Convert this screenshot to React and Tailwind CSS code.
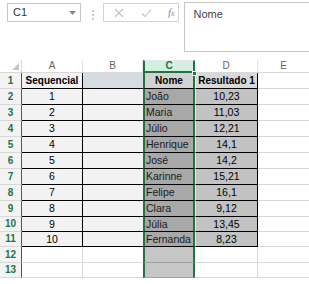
import React from "react";

const data = [
  ["1", "João", "10,23"],
  ["2", "Maria", "11,03"],
  ["3", "Júlio", "12,21"],
  ["4", "Henrique", "14,1"],
  ["5", "José", "14,2"],
  ["6", "Karinne", "15,21"],
  ["7", "Felipe", "16,1"],
  ["8", "Clara", "9,12"],
  ["9", "Júlia", "13,45"],
  ["10", "Fernanda", "8,23"],
];

const cols = "grid grid-cols-[22px_61px_60px_52px_63px_51px]";

function RowHdr({ n }) {
  return (
    <div className="bg-[#f3f3f3] border-r border-r-[#217346] border-b border-b-[#d8d8d8] flex items-center justify-center text-[10px] font-bold text-[#217346]">
      {n}
    </div>
  );
}

export default function App() {
  const heights = ["h-[16px]", "h-[16px]", "h-[16px]", "h-[16px]", "h-[16px]", "h-[16px]", "h-[16px]", "h-[16px]", "h-[16px]", "h-[15px]", "h-[15px]"];
  return (
    <div className="w-[309px] h-[284px] overflow-hidden bg-white text-black text-[10.5px] leading-none whitespace-nowrap" style={{ fontFamily: '"Liberation Sans", Arial, sans-serif' }}>
      {/* top bar */}
      <div className="h-[60px] flex items-start pt-[2px]">
        <div className="mt-[1px] ml-[7px] w-[77px] h-[19px] border border-[#c6c6c6] flex items-center pl-[5px] pr-[4px] text-[11px] text-[#333]">
          <span className="flex-1">C1</span>
          <svg width="7" height="4" viewBox="0 0 7 4"><polygon points="0,0 7,0 3.5,4" fill="#8a8a8a" /></svg>
        </div>
        <div className="ml-[11px] mt-[8px] flex flex-col gap-[2px]">
          <div className="w-[2px] h-[2px] bg-[#c8c8c8]" />
          <div className="w-[2px] h-[2px] bg-[#c8c8c8]" />
          <div className="w-[2px] h-[2px] bg-[#c8c8c8]" />
        </div>
        <div className="ml-[9px] mt-[1px] w-[80px] h-[19px] border border-[#d4d4d4] flex items-center text-[#b4b4b4]">
          <svg className="ml-[10px]" width="10" height="10" viewBox="0 0 10 10"><path d="M1 1 L9 9 M9 1 L1 9" stroke="#c0c0c0" strokeWidth="1.1" fill="none" /></svg>
          <svg className="ml-[17px]" width="11" height="10" viewBox="0 0 11 10"><path d="M1 5.5 L4 8.5 L10 1.5" stroke="#c0c0c0" strokeWidth="1.1" fill="none" /></svg>
          <span className="ml-[16px] italic text-[11px] text-[#8c8c8c]" style={{ fontFamily: '"Liberation Serif", serif' }}>f<span className="text-[8px]">x</span></span>
        </div>
        <div className="ml-[5px] w-[130px] h-[50px] border border-[#c6c6c6] border-r-0 pl-[8px] pt-[6px] text-[11px] text-[#444]">
          Nome
        </div>
      </div>

      {/* column header */}
      <div className={`${cols} h-[13px]`}>
        <div className="border-r border-r-[#d8d8d8] border-b border-b-[#d8d8d8] flex items-end justify-end pr-[2px] pb-[2px]">
          <svg width="7" height="7" viewBox="0 0 7 7"><polygon points="7,0 7,7 0,7" fill="#c4c4c4" /></svg>
        </div>
        <div className="border-r border-r-[#e2e2e2] border-b border-b-[#d8d8d8] flex items-center justify-center text-[10px] text-[#666]">A</div>
        <div className="border-r border-r-[#e2e2e2] border-b border-b-[#d8d8d8] flex items-center justify-center text-[10px] text-[#666]">B</div>
        <div className="relative bg-[#d3efdf] border-x-2 border-[#217346] border-t border-t-[#e6e6e6] border-b-2 border-b-[#217346] flex items-center justify-center text-[10px] font-bold text-[#217346]">
          C
          <div className="absolute right-[-4px] bottom-[-5px] w-[5px] h-[5px] bg-[#217346] border border-white" />
        </div>
        <div className="border-r border-r-[#e2e2e2] border-b border-b-[#d8d8d8] flex items-center justify-center text-[10px] text-[#666]">D</div>
        <div className="border-b border-b-[#d8d8d8] flex items-center justify-center text-[10px] text-[#666]">E</div>
      </div>

      {/* row 1 */}
      <div className={`${cols} ${heights[0]}`}>
        <RowHdr n="1" />
        <div className="bg-[#f2f2f2] border-r border-r-black border-b border-b-black flex items-center justify-center font-bold text-[10px] overflow-hidden">Sequencial</div>
        <div className="bg-[#d6dce4] border-b border-b-black" />
        <div className="bg-[#d2d2d2] border-x-2 border-[#217346] border-b border-b-black flex items-center justify-center font-bold text-[10px]">
          Nome
        </div>
        <div className="bg-[#d9d9d9] border-l border-l-white border-r border-r-black border-b border-b-black flex items-center justify-center font-bold text-[10px] overflow-hidden">Resultado 1</div>
        <div className="border-b border-b-[#d8d8d8]" />
      </div>

      {data.map((r, i) => (
        <div key={i} className={`${cols} ${heights[i + 1]}`}>
          <RowHdr n={String(i + 2)} />
          <div className="bg-[#f2f2f2] border-r border-r-black border-b border-b-black flex items-center justify-center">{r[0]}</div>
          <div className="bg-[#f2f2f2] border-b border-b-black" />
          <div className="bg-[#a8a8a8] border-x-2 border-[#217346] border-b border-b-black flex items-center pl-[1px] text-[#1a1a1a] overflow-hidden">{r[1]}</div>
          <div className="bg-[#c2c2c2] border-l border-l-[#e8e8e8] border-r border-r-black border-b border-b-black flex items-center justify-center">{r[2]}</div>
          <div className="border-b border-b-[#d8d8d8]" />
        </div>
      ))}

      {[12, 13].map((n, i) => (
        <div key={n} className={`${cols} ${i === 0 ? "h-[16px]" : "h-[15px]"}`}>
          <RowHdr n={String(n)} />
          <div className="border-r border-r-[#d8d8d8] border-b border-b-[#d8d8d8]" />
          <div className="border-b border-b-[#d8d8d8]" />
          <div className="bg-[#c6c6c6] border-x-2 border-[#217346] border-b border-b-[#a0a0a0]" />
          <div className="border-r border-r-[#d8d8d8] border-b border-b-[#d8d8d8]" />
          <div className="border-b border-b-[#d8d8d8]" />
        </div>
      ))}
    </div>
  );
}
